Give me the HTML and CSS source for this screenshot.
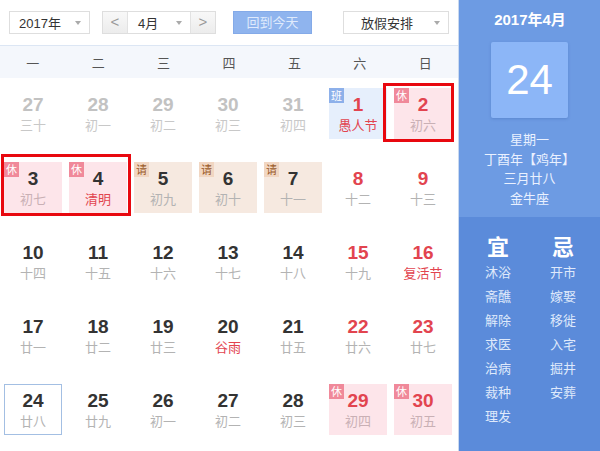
FILE: index.html
```html
<!DOCTYPE html>
<html lang="zh">
<head>
<meta charset="utf-8">
<link rel="stylesheet" href="styles.css">
</head>
<body>
<div class="app">
  <div class="cal">
    <div class="toolbar">
      <div class="select sel-year"><span>2017年</span><i class="caret"></i></div>
      <div class="month-group">
        <div class="arrow-btn">&lt;</div>
        <div class="month-field"><span>4月</span><i class="caret"></i></div>
        <div class="arrow-btn">&gt;</div>
      </div>
      <div class="today-btn">回到今天</div>
      <div class="select sel-holiday"><span>放假安排</span><i class="caret"></i></div>
    </div>
    <div class="weekhead">
      <span>一</span><span>二</span><span>三</span><span>四</span><span>五</span><span>六</span><span>日</span>
    </div>
    <div class="grid">
      <div class="cell other"><b>27</b><em>三十</em></div>
      <div class="cell other"><b>28</b><em>初一</em></div>
      <div class="cell other"><b>29</b><em>初二</em></div>
      <div class="cell other"><b>30</b><em>初三</em></div>
      <div class="cell other"><b>31</b><em>初四</em></div>
      <div class="cell work wkend"><i class="tag tag-ban">班</i><b>1</b><em class="fest">愚人节</em></div>
      <div class="cell rest wkend"><i class="tag tag-xiu">休</i><b>2</b><em>初六</em></div>

      <div class="cell rest"><i class="tag tag-xiu">休</i><b>3</b><em>初七</em></div>
      <div class="cell rest"><i class="tag tag-xiu">休</i><b>4</b><em class="fest">清明</em></div>
      <div class="cell leave"><i class="tag tag-qing">请</i><b>5</b><em>初九</em></div>
      <div class="cell leave"><i class="tag tag-qing">请</i><b>6</b><em>初十</em></div>
      <div class="cell leave"><i class="tag tag-qing">请</i><b>7</b><em>十一</em></div>
      <div class="cell wkend"><b>8</b><em>十二</em></div>
      <div class="cell wkend"><b>9</b><em>十三</em></div>

      <div class="cell"><b>10</b><em>十四</em></div>
      <div class="cell"><b>11</b><em>十五</em></div>
      <div class="cell"><b>12</b><em>十六</em></div>
      <div class="cell"><b>13</b><em>十七</em></div>
      <div class="cell"><b>14</b><em>十八</em></div>
      <div class="cell wkend"><b>15</b><em>十九</em></div>
      <div class="cell wkend"><b>16</b><em class="fest">复活节</em></div>

      <div class="cell"><b>17</b><em>廿一</em></div>
      <div class="cell"><b>18</b><em>廿二</em></div>
      <div class="cell"><b>19</b><em>廿三</em></div>
      <div class="cell"><b>20</b><em class="fest">谷雨</em></div>
      <div class="cell"><b>21</b><em>廿五</em></div>
      <div class="cell wkend"><b>22</b><em>廿六</em></div>
      <div class="cell wkend"><b>23</b><em>廿七</em></div>

      <div class="cell today"><b>24</b><em>廿八</em></div>
      <div class="cell"><b>25</b><em>廿九</em></div>
      <div class="cell"><b>26</b><em>初一</em></div>
      <div class="cell"><b>27</b><em>初二</em></div>
      <div class="cell"><b>28</b><em>初三</em></div>
      <div class="cell rest wkend"><i class="tag tag-xiu">休</i><b>29</b><em>初四</em></div>
      <div class="cell rest wkend"><i class="tag tag-xiu">休</i><b>30</b><em>初五</em></div>
    </div>
    <div class="mark mark-a"></div>
    <div class="mark mark-b"></div>
  </div>
  <div class="side">
    <div class="side-top">
      <div class="ym">2017年4月</div>
      <div class="bigday">24</div>
      <div class="info">
        <div>星期一</div>
        <div>丁酉年【鸡年】</div>
        <div>三月廿八</div>
        <div>金牛座</div>
      </div>
    </div>
    <div class="side-bottom">
      <div class="col">
        <div class="col-head">宜</div>
        <div>沐浴</div><div>斋醮</div><div>解除</div><div>求医</div><div>治病</div><div>裁种</div><div>理发</div>
      </div>
      <div class="col">
        <div class="col-head">忌</div>
        <div>开市</div><div>嫁娶</div><div>移徙</div><div>入宅</div><div>掘井</div><div>安葬</div>
      </div>
    </div>
  </div>
</div>
</body>
</html>
```

FILE: styles.css
```css
* { box-sizing: border-box; }
html, body { margin: 0; padding: 0; }
body {
  width: 600px;
  height: 451px;
  overflow: hidden;
  background: #fff;
  font-family: "Liberation Sans", "Noto Sans CJK SC", sans-serif;
  color: #333;
}
.app { display: flex; width: 600px; height: 451px; }

.cal {
  position: relative;
  width: 459px;
  height: 451px;
  border-right: 1px solid #c9d9f0;
}

.toolbar {
  height: 46px;
  border-bottom: 1px solid #dce6f4;
  display: flex;
  align-items: flex-start;
  padding: 11px 0 0 9px;
  font-size: 13px;
}
.select {
  height: 23px;
  border: 1px solid #dedede;
  background: #fff;
  display: flex;
  align-items: center;
  justify-content: space-between;
  padding: 0 8px 0 9px;
  color: #333;
}
.sel-year { width: 81px; }
.sel-holiday { width: 106px; margin-left: 31px; padding-left: 17px; }
.caret {
  width: 0; height: 0;
  border-left: 3px solid transparent;
  border-right: 3px solid transparent;
  border-top: 4px solid #aaa;
}
.month-group {
  margin-left: 12px;
  height: 23px;
  display: flex;
  border: 1px solid #dedede;
}
.arrow-btn {
  width: 24px;
  background: linear-gradient(#f8f8f8, #ececec);
  color: #999;
  font-size: 15px;
  line-height: 20px;
  text-align: center;
}
.month-field {
  width: 64px;
  border-left: 1px solid #e2e2e2;
  border-right: 1px solid #e2e2e2;
  display: flex;
  align-items: center;
  justify-content: space-between;
  padding: 0 8px 0 10px;
}
.today-btn {
  margin-left: 17px;
  width: 79px;
  height: 23px;
  background: #8fb4ee;
  border: 1px solid #84aae8;
  color: #dfeafc;
  text-align: center;
  line-height: 21px;
  font-size: 13px;
}

.weekhead {
  height: 32px;
  background: #f4f7fc;
  display: grid;
  grid-template-columns: repeat(7, 1fr);
  align-items: center;
  text-align: center;
  font-size: 13px;
  color: #555;
  font-family: "Noto Sans CJK SC", sans-serif;
}

.grid {
  display: grid;
  grid-template-columns: repeat(7, 58px);
  grid-auto-rows: 51px;
  column-gap: 7px;
  row-gap: 23px;
  padding: 10px 0 0 4px;
}
.cell {
  position: relative;
  text-align: center;
  padding-top: 6px;
}
.cell b {
  display: block;
  font-family: "Liberation Sans", sans-serif;
  font-weight: bold;
  font-size: 19px;
  line-height: 22px;
  color: #333;
}
.cell em {
  display: block;
  font-style: normal;
  font-size: 13px;
  line-height: 18px;
  color: #b3b3b3;
  font-family: "Noto Sans CJK SC", sans-serif;
}
.cell.other b { color: #c2c2c2; }
.cell.other em { color: #c8c8c8; }
.cell.wkend b { color: #e2444f; }
.cell em.fest { color: #e2444f; }
.cell.rest { background: #fde5ea; }
.cell.rest em { color: #c9b0b5; }
.cell.rest em.fest { color: #e2444f; }
.cell.work { background: #e6effc; }
.cell.leave { background: #f6e9e0; }
.cell.today { border: 1px solid #a3bfe3; padding-top: 5px; }

.tag {
  position: absolute;
  top: 0;
  left: 0;
  width: 15px;
  height: 15px;
  font-style: normal;
  font-size: 11px;
  line-height: 15px;
  text-align: center;
  font-family: "Noto Sans CJK SC", sans-serif;
}
.tag-xiu { background: #f0899a; color: #fff; }
.tag-ban { background: #8db0ea; color: #fff; }
.tag-qing { background: #f1d6c2; color: #9a5a2a; }

.mark {
  position: absolute;
  border: 3px solid #e8080f;
}
.mark-a { left: 383px; top: 83px; width: 71px; height: 59px; }
.mark-b { left: 1px; top: 154px; width: 130px; height: 62px; }

.side {
  width: 141px;
  height: 451px;
  display: flex;
  flex-direction: column;
  color: #fff;
  font-family: "Noto Sans CJK SC", sans-serif;
}
.side-top {
  height: 217px;
  background: #6d9be3;
  display: flex;
  flex-direction: column;
  align-items: center;
  padding-top: 10px;
}
.ym {
  font-family: "Liberation Sans", "Noto Sans CJK SC", sans-serif;
  font-weight: bold;
  font-size: 15px;
  line-height: 20px;
  margin-left: 1px;
}
.bigday {
  margin-top: 12px;
  width: 77px;
  height: 76px;
  background: #8cb6f7;
  border-radius: 2px;
  box-shadow: 0 1px 3px rgba(40, 80, 150, 0.25);
  font-family: "Liberation Sans", sans-serif;
  font-size: 42px;
  line-height: 76px;
  text-align: center;
}
.info {
  margin-top: 11px;
  text-align: center;
  font-size: 13px;
  line-height: 19.5px;
  color: #eaf1ff;
}
.side-bottom {
  flex: 1;
  background: #5b8bda;
  display: flex;
  justify-content: space-between;
  padding: 13px 12px 0 14px;
}
.col {
  width: 50px;
  text-align: center;
  font-size: 13px;
  line-height: 24px;
  color: #dfe9fb;
}
.col-head {
  font-size: 22px;
  font-weight: bold;
  line-height: 30px;
  color: #fff;
}
```
